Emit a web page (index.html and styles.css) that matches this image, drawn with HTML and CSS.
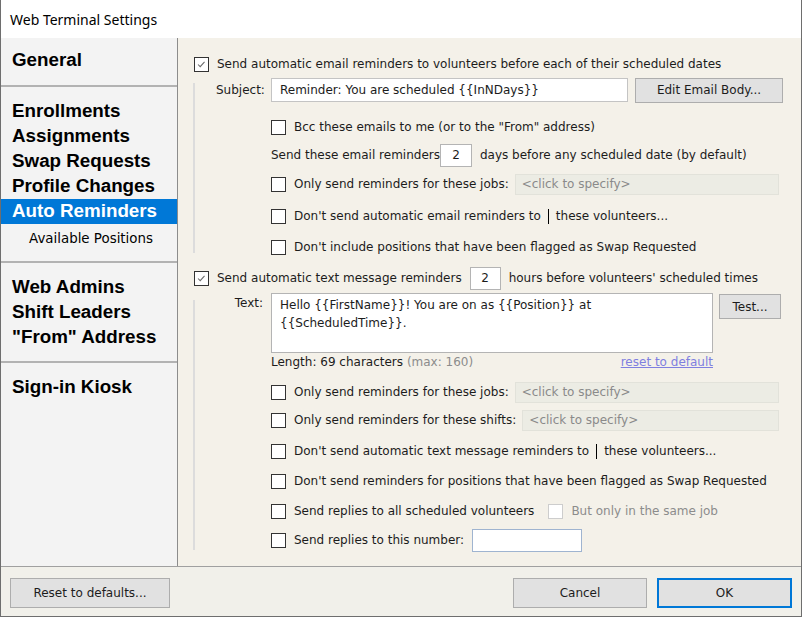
FILE: index.html
```html
<!DOCTYPE html>
<html lang="en">

<head>
    <meta charset="UTF-8">
    <title>Web Terminal Settings</title>
    <link rel="stylesheet" href="styles.css">
</head>

<body>
    <div class="window">
        <div class="titlebar">Web Terminal Settings</div>
        <div class="middle">
            <nav class="sidebar">
                <div class="nav-section first">
                    <div class="nav-item">General</div>
                </div>
                <div class="nav-section second">
                    <div class="nav-item">Enrollments</div>
                    <div class="nav-item">Assignments</div>
                    <div class="nav-item">Swap Requests</div>
                    <div class="nav-item">Profile Changes</div>
                    <div class="nav-item active">Auto Reminders</div>
                    <div class="nav-sub">Available Positions</div>
                </div>
                <div class="nav-section third">
                    <div class="nav-item">Web Admins</div>
                    <div class="nav-item">Shift Leaders</div>
                    <div class="nav-item">"From" Address</div>
                </div>
                <div class="nav-section last">
                    <div class="nav-item">Sign-in Kiosk</div>
                </div>
            </nav>

            <section class="content">
                <div class="row">
                    <span class="cb"><svg viewBox="0 0 15 15"><polyline points="3.5,7.5 6,10 11,4.5" /></svg></span>
                    <span>Send automatic email reminders to volunteers before each of their scheduled dates</span>
                </div>
                <div class="group email-group">
                    <div class="row subject-row">
                        <span class="label">Subject:</span>
                        <div class="textbox subject">Reminder: You are scheduled {{InNDays}}</div>
                        <button class="btn edit-body">Edit Email Body...</button>
                    </div>
                    <div class="row sub mt12">
                        <span class="cb"></span><span>Bcc these emails to me (or to the "From" address)</span>
                    </div>
                    <div class="row sub mt4">
                        <span>Send these email reminders</span>
                        <div class="num">2</div>
                        <span class="after-num">days before any scheduled date (by default)</span>
                    </div>
                    <div class="row sub mt5">
                        <span class="cb"></span><span>Only send reminders for these jobs:</span>
                        <div class="spec">&lt;click to specify&gt;</div>
                    </div>
                    <div class="row sub mt8">
                        <span class="cb"></span><span>Don't send automatic email reminders to</span>
                        <span class="caret"></span><span>these volunteers...</span>
                    </div>
                    <div class="row sub mt7 email-last">
                        <span class="cb"></span><span>Don't include positions that have been flagged as Swap Requested</span>
                    </div>
                </div>

                <div class="row mt13">
                    <span class="cb"><svg viewBox="0 0 15 15"><polyline points="3.5,7.5 6,10 11,4.5" /></svg></span>
                    <span>Send automatic text message reminders</span>
                    <div class="num hours">2</div>
                    <span class="after-num">hours before volunteers' scheduled times</span>
                </div>
                <div class="group text-group">
                    <div class="text-row">
                        <span class="label text-label">Text:</span>
                        <div class="textarea">Hello {{FirstName}}! You are on as {{Position}} at<br>{{ScheduledTime}}.</div>
                        <button class="btn test">Test...</button>
                    </div>
                    <div class="length-row">
                        <span>Length: 69 characters <span class="muted">(max: 160)</span></span>
                        <a class="link" href="#">reset to default</a>
                    </div>
                    <div class="row sub mt9">
                        <span class="cb"></span><span>Only send reminders for these jobs:</span>
                        <div class="spec">&lt;click to specify&gt;</div>
                    </div>
                    <div class="row sub mt4">
                        <span class="cb"></span><span>Only send reminders for these shifts:</span>
                        <div class="spec">&lt;click to specify&gt;</div>
                    </div>
                    <div class="row sub mt7">
                        <span class="cb"></span><span>Don't send automatic text message reminders to</span>
                        <span class="caret"></span><span>these volunteers...</span>
                    </div>
                    <div class="row sub mt6">
                        <span class="cb"></span><span>Don't send reminders for positions that have been flagged as Swap Requested</span>
                    </div>
                    <div class="row sub mt6">
                        <span class="cb"></span><span>Send replies to all scheduled volunteers</span>
                        <span class="cb disabled"></span><span class="muted">But only in the same job</span>
                    </div>
                    <div class="row sub mt5 text-last">
                        <span class="cb"></span><span>Send replies to this number:</span>
                        <div class="phone"></div>
                    </div>
                </div>
            </section>
        </div>
        <footer class="buttonbar">
            <button class="btn reset">Reset to defaults...</button>
            <div class="buttonbar-right">
                <button class="btn cancel">Cancel</button>
                <button class="btn ok">OK</button>
            </div>
        </footer>
    </div>
</body>

</html>
```

FILE: styles.css
```css
body {
    margin: 0;
    padding: 0;
    font-family: 'DejaVu Sans', Verdana, sans-serif;
    font-size: 12px;
    color: #1c1c1c;
    background-color: #fff;
}

.window {
    width: 802px;
    height: 617px;
    box-sizing: border-box;
    border: 1px solid #6e6e6e;
    border-top: none;
    display: flex;
    flex-direction: column;
    overflow: hidden;
}

.titlebar {
    height: 38px;
    flex: none;
    display: flex;
    align-items: center;
    padding-left: 9px;
    background-color: #fff;
    font-family: 'Noto Sans', sans-serif;
    font-size: 14px;
    color: #000;
}

.middle {
    display: flex;
    height: 528px;
    flex: none;
}

/* left navigation */
.sidebar {
    width: 176px;
    background-color: #f3f3f3;
    border-right: 1px solid #8c8c8c;
    font-family: 'Liberation Sans', Arial, sans-serif;
    font-weight: bold;
    font-size: 18.8px;
    color: #000;
}

.nav-section {
    border-bottom: 2px solid #b2b2b2;
    padding: 12px 0 11px;
}

.nav-section.first {
    padding: 10px 0 12px;
}

.nav-section.second {
    padding-bottom: 7px;
}

.nav-section.last {
    border-bottom: none;
}

.nav-item {
    height: 25px;
    line-height: 24px;
    padding-left: 11px;
}

.nav-item.active {
    background-color: #0078d7;
    color: #fff;
}

.nav-sub {
    height: 30px;
    line-height: 30px;
    padding-left: 28px;
    font-family: 'DejaVu Sans', Verdana, sans-serif;
    font-weight: normal;
    font-size: 13.4px;
}

/* settings panel */
.content {
    flex: 1;
    background-color: #f4f1e9;
    padding: 14px 0 0 16px;
    display: flex;
    flex-direction: column;
}

.row {
    display: flex;
    align-items: center;
    height: 24px;
    flex: none;
    white-space: nowrap;
}

.mt4 { margin-top: 4px; }
.mt5 { margin-top: 5px; }
.mt6 { margin-top: 6px; }
.mt7 { margin-top: 7px; }
.mt8 { margin-top: 8px; }
.mt9 { margin-top: 9px; }
.mt12 { margin-top: 12px; }
.mt13 { margin-top: 13px; }

.cb {
    width: 15px;
    height: 15px;
    box-sizing: border-box;
    border: 1px solid #333;
    background-color: #fff;
    margin-right: 8px;
    flex: none;
}

.cb svg {
    display: block;
    width: 13px;
    height: 13px;
}

.cb polyline {
    fill: none;
    stroke: #6a6a6a;
    stroke-width: 1.2;
}

.cb.disabled {
    border-color: #cdcdcd;
    margin-left: 14px;
}

.muted {
    color: #8c8c8c;
}

.group {
    display: flex;
    flex-direction: column;
    flex: none;
    border-left: 2px solid #dcdcdc;
    margin-left: -1px;
    padding-left: 21px;
}

.email-group {
    margin-top: 7px;
}

.subject-row {
    margin-top: -6px;
    height: 26px;
}

.email-last {
    margin-bottom: -6px;
}

.text-group {
    margin-top: 10px;
}

.text-last {
    margin-bottom: -2px;
}

.sub {
    margin-left: 55px;
}

.label {
    width: 55px;
    flex: none;
}

.textbox {
    height: 24px;
    box-sizing: border-box;
    border: 1px solid #c4c4c4;
    background-color: #fff;
    display: flex;
    align-items: center;
    padding-left: 8px;
}

.subject {
    width: 357px;
}

.btn {
    font-family: 'DejaVu Sans', Verdana, sans-serif;
    font-size: 12px;
    color: #1c1c1c;
    background-color: #e1e1e1;
    border: 1px solid #adadad;
    padding: 0;
}

.edit-body {
    width: 148px;
    height: 25px;
    margin-left: 7px;
}

.num {
    width: 32px;
    height: 23px;
    box-sizing: border-box;
    border: 1px solid #b4b4b4;
    background-color: #fff;
    display: flex;
    align-items: center;
    justify-content: center;
    flex: none;
}

.num.hours {
    width: 31px;
    margin-left: 8px;
}

.after-num {
    margin-left: 8px;
}

.spec {
    flex: 1;
    height: 21px;
    margin: 0 22px 0 6px;
    box-sizing: border-box;
    background-color: #ecece4;
    border: 1px solid #e2e2da;
    color: #8a8a8a;
    padding-left: 6px;
    display: flex;
    align-items: center;
}

.caret {
    width: 0;
    height: 15px;
    border-left: 1px solid #000;
    margin: 0 7px;
}

.text-row {
    display: flex;
    align-items: flex-start;
    flex: none;
    margin-top: -7px;
}

.text-label {
    text-align: right;
    padding: 3px 8px 0 0;
    box-sizing: border-box;
}

.textarea {
    width: 442px;
    height: 60px;
    box-sizing: border-box;
    border: 1px solid #b4b4b4;
    background-color: #fff;
    padding: 2px 8px;
    line-height: 18px;
}

.test {
    width: 62px;
    height: 25px;
    margin: 1px 0 0 6px;
}

.length-row {
    display: flex;
    justify-content: space-between;
    align-items: center;
    flex: none;
    width: 442px;
    height: 18px;
    margin-left: 55px;
}

.link {
    color: #7f7fe0;
    text-decoration: underline;
}

.phone {
    width: 110px;
    height: 23px;
    box-sizing: border-box;
    border: 1px solid #9fb4d0;
    background-color: #fff;
    margin-left: 8px;
}

/* bottom buttons */
.buttonbar {
    flex: 1;
    border-top: 1px solid #a0a0a0;
    background-color: #f1f0ea;
    display: flex;
    justify-content: space-between;
    align-items: flex-start;
    padding: 11px 9px 0;
}

.buttonbar-right {
    display: flex;
    gap: 10px;
}

.buttonbar .btn {
    height: 30px;
}

.reset {
    width: 160px;
}

.cancel {
    width: 134px;
}

.ok {
    width: 135px;
    border: 2px solid #0078d7;
}
```
